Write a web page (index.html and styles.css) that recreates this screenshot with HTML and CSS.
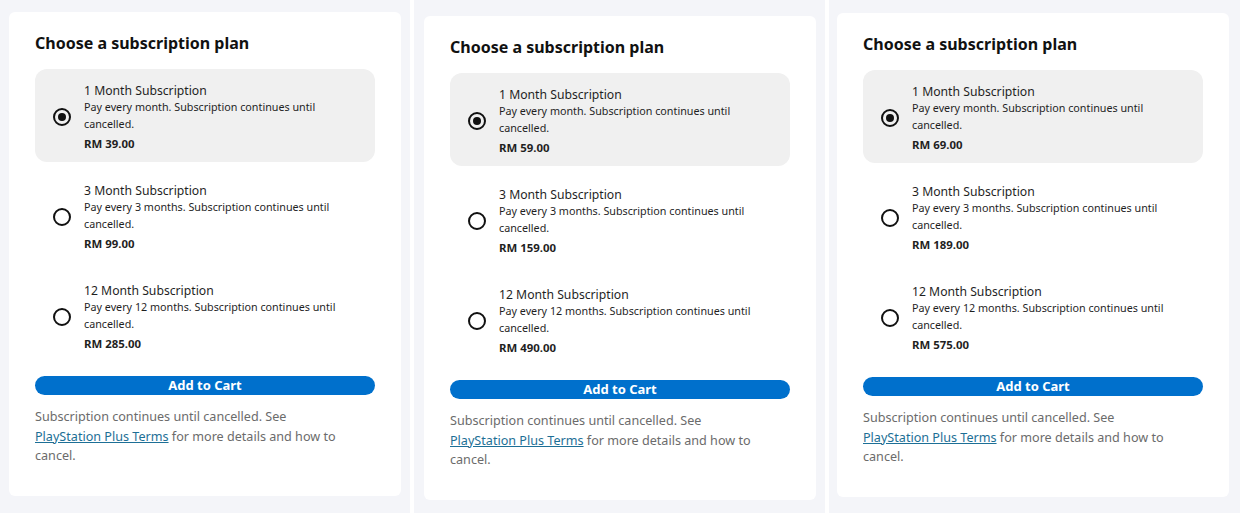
FILE: index.html
```html
<!DOCTYPE html>
<html>
<head>
  <meta charset="utf-8">
  <title>Choose a subscription plan</title>
  <link rel="stylesheet" href="styles.css">
</head>
<body>
  <div class="panels">

    <div class="panel">
      <div class="card card-a">
        <h2>Choose a subscription plan</h2>
        <div class="plans">
          <label class="plan selected">
            <span class="radio checked"></span>
            <span class="plan-info">
              <span class="plan-title">1 Month Subscription</span>
              <span class="plan-desc">Pay every month. Subscription continues until cancelled.</span>
              <span class="plan-price">RM 39.00</span>
            </span>
          </label>
          <label class="plan">
            <span class="radio"></span>
            <span class="plan-info">
              <span class="plan-title">3 Month Subscription</span>
              <span class="plan-desc">Pay every 3 months. Subscription continues until cancelled.</span>
              <span class="plan-price">RM 99.00</span>
            </span>
          </label>
          <label class="plan">
            <span class="radio"></span>
            <span class="plan-info">
              <span class="plan-title">12 Month Subscription</span>
              <span class="plan-desc">Pay every 12 months. Subscription continues until cancelled.</span>
              <span class="plan-price">RM 285.00</span>
            </span>
          </label>
        </div>
        <button class="cart-btn">Add to Cart</button>
        <p class="terms">Subscription continues until cancelled. See <a href="#">PlayStation Plus Terms</a> for more details and how to cancel.</p>
      </div>
    </div>

    <div class="panel">
      <div class="card card-b">
        <h2>Choose a subscription plan</h2>
        <div class="plans">
          <label class="plan selected">
            <span class="radio checked"></span>
            <span class="plan-info">
              <span class="plan-title">1 Month Subscription</span>
              <span class="plan-desc">Pay every month. Subscription continues until cancelled.</span>
              <span class="plan-price">RM 59.00</span>
            </span>
          </label>
          <label class="plan">
            <span class="radio"></span>
            <span class="plan-info">
              <span class="plan-title">3 Month Subscription</span>
              <span class="plan-desc">Pay every 3 months. Subscription continues until cancelled.</span>
              <span class="plan-price">RM 159.00</span>
            </span>
          </label>
          <label class="plan">
            <span class="radio"></span>
            <span class="plan-info">
              <span class="plan-title">12 Month Subscription</span>
              <span class="plan-desc">Pay every 12 months. Subscription continues until cancelled.</span>
              <span class="plan-price">RM 490.00</span>
            </span>
          </label>
        </div>
        <button class="cart-btn">Add to Cart</button>
        <p class="terms">Subscription continues until cancelled. See <a href="#">PlayStation Plus Terms</a> for more details and how to cancel.</p>
      </div>
    </div>

    <div class="panel">
      <div class="card card-c">
        <h2>Choose a subscription plan</h2>
        <div class="plans">
          <label class="plan selected">
            <span class="radio checked"></span>
            <span class="plan-info">
              <span class="plan-title">1 Month Subscription</span>
              <span class="plan-desc">Pay every month. Subscription continues until cancelled.</span>
              <span class="plan-price">RM 69.00</span>
            </span>
          </label>
          <label class="plan">
            <span class="radio"></span>
            <span class="plan-info">
              <span class="plan-title">3 Month Subscription</span>
              <span class="plan-desc">Pay every 3 months. Subscription continues until cancelled.</span>
              <span class="plan-price">RM 189.00</span>
            </span>
          </label>
          <label class="plan">
            <span class="radio"></span>
            <span class="plan-info">
              <span class="plan-title">12 Month Subscription</span>
              <span class="plan-desc">Pay every 12 months. Subscription continues until cancelled.</span>
              <span class="plan-price">RM 575.00</span>
            </span>
          </label>
        </div>
        <button class="cart-btn">Add to Cart</button>
        <p class="terms">Subscription continues until cancelled. See <a href="#">PlayStation Plus Terms</a> for more details and how to cancel.</p>
      </div>
    </div>

  </div>
</body>
</html>
```

FILE: styles.css
```css
* {
  margin: 0;
  padding: 0;
  box-sizing: border-box;
}

body {
  font-family: 'Noto Sans', 'Liberation Sans', sans-serif;
  background: #ffffff;
  color: #1f1f1f;
  width: 1240px;
  height: 513px;
  overflow: hidden;
}

.panels {
  display: grid;
  grid-template-columns: 410px 411px 411px;
  gap: 4px;
  height: 513px;
}

.panel {
  background: #f4f5f9;
  overflow: hidden;
}

.card {
  width: 392px;
  height: 484px;
  background: white;
  border-radius: 6px;
  padding: 20px 26px 0;
}

.card-a { margin: 12px 0 0 9px; }
.card-b { margin: 16px 0 0 10px; }
.card-c { margin: 13px 0 0 8px; }

.card h2 {
  font-size: 16px;
  font-weight: 700;
  line-height: 22px;
  color: #111;
  margin-bottom: 15px;
}

.plans {
  display: flex;
  flex-direction: column;
  gap: 7px;
}

.plan {
  display: flex;
  align-items: center;
  gap: 13px;
  height: 93px;
  padding: 0 18px;
  border-radius: 12px;
  cursor: pointer;
}

.plan.selected {
  background: #f0f0f0;
}

.radio {
  flex: none;
  width: 18px;
  height: 18px;
  border: 2px solid #111;
  border-radius: 50%;
  display: flex;
  align-items: center;
  justify-content: center;
  margin-top: 2px;
}

.radio.checked::after {
  content: '';
  width: 8px;
  height: 8px;
  border-radius: 50%;
  background: #111;
}

.plan-info {
  display: flex;
  flex-direction: column;
  padding-top: 3px;
}

.plan-title {
  font-size: 12.2px;
  line-height: 16px;
  color: #1f1f1f;
}

.plan-desc {
  font-size: 10.75px;
  line-height: 17px;
  color: #1f1f1f;
  width: 262px;
}

.plan-price {
  font-size: 11.4px;
  font-weight: 700;
  line-height: 16px;
  margin-top: 3px;
  color: #1f1f1f;
}

.cart-btn {
  display: block;
  width: 100%;
  height: 19px;
  margin-top: 14px;
  border: none;
  border-radius: 10px;
  background: #0070cc;
  color: white;
  font-family: inherit;
  font-size: 13px;
  font-weight: 700;
  line-height: 19px;
  cursor: pointer;
}

.terms {
  margin-top: 12px;
  font-size: 12.6px;
  line-height: 19.5px;
  color: #6b6b6b;
}

.terms a {
  color: #1d6f96;
  white-space: nowrap;
}
```
